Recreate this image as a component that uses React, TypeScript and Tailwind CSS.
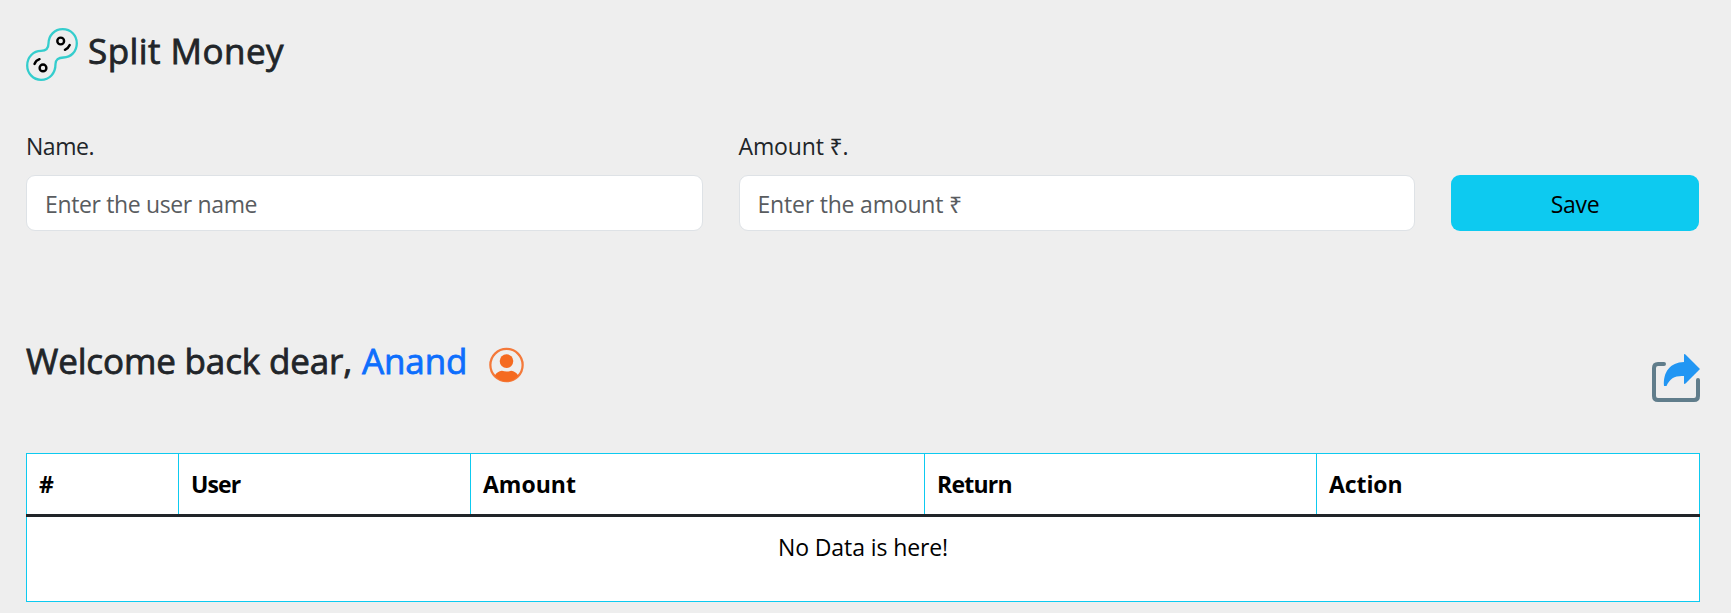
const fields = [
  { label: 'Name.', placeholder: 'Enter the user name', labelClass: 'tracking-[-0.45px]', inputClass: 'tracking-[-0.36px]' },
  { label: 'Amount ₹.', placeholder: 'Enter the amount ₹', labelClass: 'tracking-[-0.15px]', inputClass: 'tracking-[-0.2px]' },
];

const columns = [
  { name: '#', className: '' },
  { name: 'User', className: 'tracking-[-0.9px]' },
  { name: 'Amount', className: '' },
  { name: 'Return', className: 'tracking-[-0.75px]' },
  { name: 'Action', className: 'tracking-[-0.1px]' },
];

function Logo() {
  return (
    <svg className="h-[53px] w-[52px] shrink-0" viewBox="0 0 52 53" fill="none" strokeLinecap="round">
      <path
        d="M22.5 15.5C22.5 7.5 28.500 1.200 36.700 1.200C44.800 1.200 50.800 7.300 50.800 15.300C50.800 23.500 45 29.300 37.500 29.500C32.500 29.700 29.800 31 29.500 36C29.500 45.500 23.500 51.800 15 51.800C7.300 51.800 1.200 45.500 1.200 37.500C1.200 29 7.500 22.900 15 22.900C20.500 22.900 22.500 20.500 22.500 15.500Z"
        stroke="#34cdcd"
        strokeWidth="2.300"
      />
      <g stroke="#000" strokeWidth="2.400">
        <circle cx="34.700" cy="13" r="3.400" />
        <circle cx="17" cy="39.900" r="3.400" />
        <path d="M38.900 21.800Q42.400 20.300 43.700 17M8.500 36Q9.800 32.500 13.500 31.200" />
      </g>
    </svg>
  );
}

function UserIcon() {
  return (
    <svg className="h-9 w-[35px]" viewBox="0 0 34 35" fill="#f56a20">
      <circle cx="17" cy="17.500" r="15.700" fill="none" stroke="#f4793a" strokeWidth="2.200" />
      <circle cx="17" cy="13.700" r="6.600" />
      <path d="M5.500 28C7.500 24.800 9.500 23.700 12.500 23.200Q17 24.500 21.500 23.200C24.500 23.700 26.500 24.800 28.500 28Q23.500 33.500 17 33.500T5.500 28Z" />
    </svg>
  );
}

function ShareIcon() {
  return (
    <svg className="h-12 w-12" viewBox="0 0 48 48">
      <path d="M12 10H6Q2 10 2 14V42Q2 46 6 46H42Q46 46 46 42V26" fill="none" stroke="#607d8b" strokeWidth="4" strokeLinecap="round" />
      <path d="M32 0L33.500 0.500L48 15L33.500 29.500L32 30V22C23 21.500 18 24 14.500 32H12C11 18 18 8.500 32 8Z" fill="#2196f3" />
    </svg>
  );
}

export default function App() {
  return (
    <div className="h-[613px] overflow-hidden bg-[#eee] pr-8 pl-[26px] font-['Open_Sans','Noto_Sans',sans-serif] text-[23px] leading-9 text-[#212529]">
      <header className="flex h-[128px] items-start pt-7">
        <Logo />
        <h1 className="ml-2.5 pt-px text-[35px] leading-[43px] font-medium tracking-[0.45px] [-webkit-text-stroke:0.8px]">
          Split Money
        </h1>
      </header>

      <form className="flex items-end gap-9" onSubmit={(e) => e.preventDefault()}>
        {fields.map((f) => (
          <label key={f.label} className="flex flex-1 flex-col gap-[11px]">
            <span className={f.labelClass}>{f.label}</span>
            <input
              className={`h-14 w-full rounded-[9px] border border-[#dee2e6] bg-white px-[18px] pt-0.5 placeholder:text-[#595c5f] ${f.inputClass}`}
              placeholder={f.placeholder}
            />
          </label>
        ))}
        <button className="h-14 w-[248px] rounded-[9px] bg-[#0dcaf0] pt-0.5 tracking-[-0.3px] text-black">Save</button>
      </form>

      <section className="flex h-[222px] items-start justify-between pt-[108px]">
        <h2 className="flex text-[35px] leading-[43px] font-medium tracking-[-0.15px] [-webkit-text-stroke:0.8px]">
          <span>Welcome back dear,</span>
          <span className="ml-[10px] text-[#0d6efd]">Anand</span>
          <span className="mt-2 ml-[22px]"><UserIcon /></span>
        </h2>
        <div className="-mr-px mt-[15px]"><ShareIcon /></div>
      </section>

      <table className="w-[1674px] table-fixed border-collapse border border-[#0dcaf0] bg-white text-black">
        <colgroup>
          <col className="w-[152px]" />
          <col className="w-[292px]" />
          <col className="w-[454px]" />
          <col className="w-[392px]" />
          <col />
        </colgroup>
        <thead>
          <tr className="h-[62px] border-b-3 border-b-[#212529] text-left">
            {columns.map((c) => (
              <th key={c.name} className={`border-x border-x-[#0dcaf0] px-3 py-0 font-bold ${c.className}`}>{c.name}</th>
            ))}
          </tr>
        </thead>
        <tbody>
          <tr className="h-[86px]">
            <td colSpan={5} className="px-3 pt-3 text-center align-top tracking-[-0.1px]">No Data is here!</td>
          </tr>
        </tbody>
      </table>
    </div>
  );
}
